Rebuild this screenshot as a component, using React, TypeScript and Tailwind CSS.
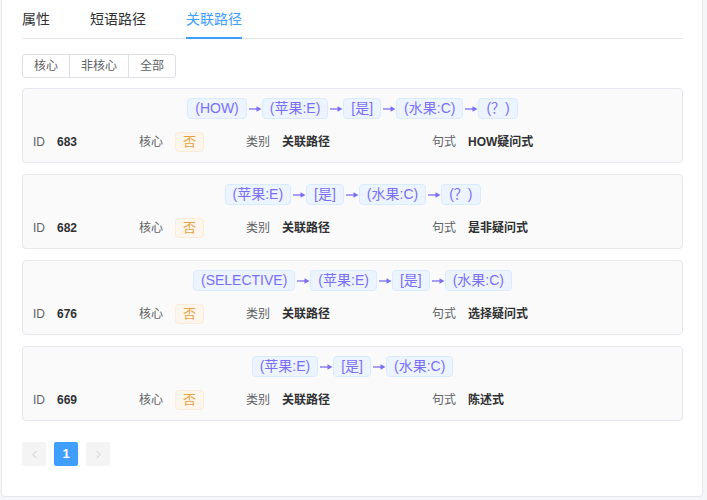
import { ChevronLeft, ChevronRight } from 'lucide-react';

interface PathRow {
  id: number;
  chain: string[];
  core: string;
  kind: string;
  pattern: string;
}

const ROWS: PathRow[] = [
  { id: 683, chain: ['(HOW)', '(苹果:E)', '[是]', '(水果:C)', '(？)'], core: '否', kind: '关联路径', pattern: 'HOW疑问式' },
  { id: 682, chain: ['(苹果:E)', '[是]', '(水果:C)', '(？)'], core: '否', kind: '关联路径', pattern: '是非疑问式' },
  { id: 676, chain: ['(SELECTIVE)', '(苹果:E)', '[是]', '(水果:C)'], core: '否', kind: '关联路径', pattern: '选择疑问式' },
  { id: 669, chain: ['(苹果:E)', '[是]', '(水果:C)'], core: '否', kind: '关联路径', pattern: '陈述式' },
];

const TABS = ['属性', '短语路径', '关联路径'];
const FILTERS = ['核心', '非核心', '全部'];

function Arrow() {
  return (
    <svg width="15" height="8" viewBox="0 0 15 8" className="shrink-0">
      <line x1="2" y1="4" x2="11" y2="4" stroke="#7b6ef6" strokeWidth="1.3" />
      <polygon points="9.5,1.2 14.5,4 9.5,6.8" fill="#7b6ef6" />
    </svg>
  );
}

function PathCard({ row }: { row: PathRow }) {
  return (
    <div className="rounded border border-[#e4e7ed] bg-[#fafafa] px-[10px] pt-[9px] pb-[10px]">
      <div className="flex items-center justify-center">
        {row.chain.map((node, i) => (
          <div key={i} className="flex items-center">
            {i > 0 && <Arrow />}
            <span className="h-[21px] leading-[19px] px-[7px] rounded border border-[#d9ecff] bg-[#ecf5ff] text-[14px] text-[#7b6ef6] whitespace-pre">
              {node}
            </span>
          </div>
        ))}
      </div>
      <div className="mt-[13px] grid grid-cols-[106px_107px_186px_1fr] items-center h-[20px] text-[12px]">
        <div className="flex items-center">
          <span className="text-[#606266] mr-[12px]">ID</span>
          <span className="font-bold text-[#303133]">{row.id}</span>
        </div>
        <div className="flex items-center">
          <span className="text-[#606266] mr-[12px]">核心</span>
          <span className="h-[20px] leading-[18px] px-[7px] rounded border border-[#faecd8] bg-[#fdf6ec] text-[13px] text-[#e6a23c]">
            {row.core}
          </span>
        </div>
        <div className="flex items-center">
          <span className="text-[#606266] mr-[12px]">类别</span>
          <span className="font-bold text-[#303133]">{row.kind}</span>
        </div>
        <div className="flex items-center">
          <span className="text-[#606266] mr-[12px]">句式</span>
          <span className="font-bold text-[#303133]">{row.pattern}</span>
        </div>
      </div>
    </div>
  );
}

export default function App() {
  return (
    <div
      className="h-[500px] w-[707px] bg-[#f5f6f8] pl-px"
      style={{ fontFamily: '"Liberation Sans", "Noto Sans CJK SC", sans-serif' }}
    >
      <div className="h-[497px] w-[702px] bg-white border-x border-b border-[#e4e7ed] rounded-b pl-[20px] pr-[19px]">
        {/* tabs */}
        <div className="flex h-[39px] border-b border-[#e4e7ed]">
          {TABS.map((t, i) => (
            <div
              key={t}
              className={
                (i === 0 ? 'pr-[20px] ' : i === TABS.length - 1 ? 'pl-[20px] ' : 'px-[20px] ') +
                'h-[39px]'
              }
            >
              <div
                className={
                  i === 2
                    ? 'h-[39px] leading-[38px] text-[14px] text-[#409eff] border-b-2 border-[#409eff]'
                    : 'h-[39px] leading-[38px] text-[14px] text-[#303133]'
                }
              >
                {t}
              </div>
            </div>
          ))}
        </div>

        {/* filter buttons */}
        <div className="mt-[15px] flex">
          {FILTERS.map((f, i) => (
            <div
              key={f}
              className={
                'h-[24px] leading-[22px] text-[12px] text-[#606266] border border-[#dcdfe6] bg-white ' +
                (i === 0
                  ? 'w-[48px] text-center rounded-l-[3px]'
                  : i === 1
                    ? 'w-[60px] text-center -ml-px'
                    : 'w-[48px] text-center -ml-px rounded-r-[3px]')
              }
            >
              {f}
            </div>
          ))}
        </div>

        {/* cards */}
        <div className="mt-[10px] flex flex-col gap-[11px]">
          {ROWS.map((r) => (
            <PathCard key={r.id} row={r} />
          ))}
        </div>

        {/* pagination */}
        <div className="mt-[21px] flex gap-[8px]">
          <div className="w-[24px] h-[24px] rounded-[2px] bg-[#f4f4f5] flex items-center justify-center text-[#c0c4cc]">
            <ChevronLeft size={13} strokeWidth={1.5} />
          </div>
          <div className="w-[24px] h-[24px] rounded-[2px] bg-[#409eff] flex items-center justify-center text-white text-[13px] font-bold">
            1
          </div>
          <div className="w-[24px] h-[24px] rounded-[2px] bg-[#f4f4f5] flex items-center justify-center text-[#c0c4cc]">
            <ChevronRight size={13} strokeWidth={1.5} />
          </div>
        </div>
      </div>
    </div>
  );
}
